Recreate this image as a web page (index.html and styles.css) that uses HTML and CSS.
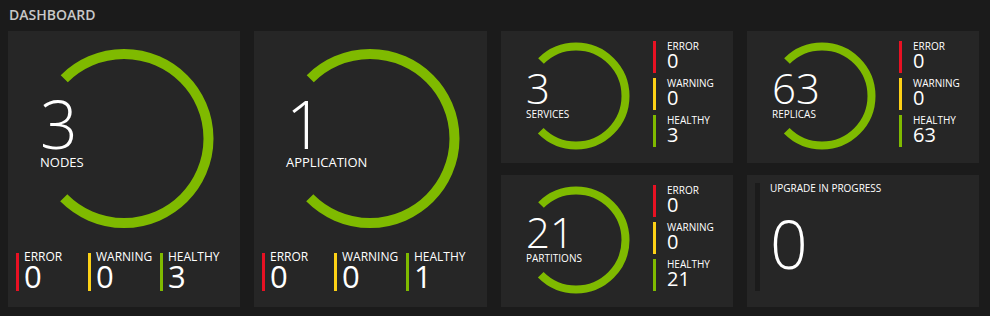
FILE: index.html
```html
<!DOCTYPE html>
<html lang="en">
<head>
  <meta charset="UTF-8">
  <title>Dashboard</title>
  <link rel="stylesheet" href="styles.css">
</head>
<body>

  <h1 class="page-title">DASHBOARD</h1>

  <div class="dashboard">

    <div class="tile tile-big">
      <div class="gauge">
        <svg class="ring" width="232" height="215" viewBox="0 0 232 215">
          <circle cx="116" cy="107.5" r="84.5" fill="none" stroke="#7fba00" stroke-width="10"
            stroke-dasharray="398.2 530.9" transform="rotate(225 116 107.5)"/>
        </svg>
        <div class="gauge-text">
          <div class="gauge-value">3</div>
          <div class="gauge-label">NODES</div>
        </div>
      </div>
      <div class="legend">
        <div class="legend-item error">
          <div class="legend-label">ERROR</div>
          <div class="legend-value">0</div>
        </div>
        <div class="legend-item warning">
          <div class="legend-label">WARNING</div>
          <div class="legend-value">0</div>
        </div>
        <div class="legend-item healthy">
          <div class="legend-label">HEALTHY</div>
          <div class="legend-value">3</div>
        </div>
      </div>
    </div>

    <div class="tile tile-big">
      <div class="gauge">
        <svg class="ring" width="232" height="215" viewBox="0 0 232 215">
          <circle cx="116" cy="107.5" r="84.5" fill="none" stroke="#7fba00" stroke-width="10"
            stroke-dasharray="398.2 530.9" transform="rotate(225 116 107.5)"/>
        </svg>
        <div class="gauge-text">
          <div class="gauge-value">1</div>
          <div class="gauge-label">APPLICATION</div>
        </div>
      </div>
      <div class="legend">
        <div class="legend-item error">
          <div class="legend-label">ERROR</div>
          <div class="legend-value">0</div>
        </div>
        <div class="legend-item warning">
          <div class="legend-label">WARNING</div>
          <div class="legend-value">0</div>
        </div>
        <div class="legend-item healthy">
          <div class="legend-label">HEALTHY</div>
          <div class="legend-value">1</div>
        </div>
      </div>
    </div>

    <div class="tile tile-small">
      <div class="gauge-sm">
        <svg class="ring" width="150" height="132" viewBox="0 0 150 132">
          <circle cx="75" cy="65" r="49.5" fill="none" stroke="#7fba00" stroke-width="8"
            stroke-dasharray="233.3 311" transform="rotate(225 75 65)"/>
        </svg>
        <div class="gauge-text">
          <div class="gauge-value">3</div>
          <div class="gauge-label">SERVICES</div>
        </div>
      </div>
      <div class="legend-sm">
        <div class="legend-item error">
          <div class="legend-label">ERROR</div>
          <div class="legend-value">0</div>
        </div>
        <div class="legend-item warning">
          <div class="legend-label">WARNING</div>
          <div class="legend-value">0</div>
        </div>
        <div class="legend-item healthy">
          <div class="legend-label">HEALTHY</div>
          <div class="legend-value">3</div>
        </div>
      </div>
    </div>

    <div class="tile tile-small">
      <div class="gauge-sm">
        <svg class="ring" width="150" height="132" viewBox="0 0 150 132">
          <circle cx="75" cy="65" r="49.5" fill="none" stroke="#7fba00" stroke-width="8"
            stroke-dasharray="233.3 311" transform="rotate(225 75 65)"/>
        </svg>
        <div class="gauge-text">
          <div class="gauge-value">63</div>
          <div class="gauge-label">REPLICAS</div>
        </div>
      </div>
      <div class="legend-sm">
        <div class="legend-item error">
          <div class="legend-label">ERROR</div>
          <div class="legend-value">0</div>
        </div>
        <div class="legend-item warning">
          <div class="legend-label">WARNING</div>
          <div class="legend-value">0</div>
        </div>
        <div class="legend-item healthy">
          <div class="legend-label">HEALTHY</div>
          <div class="legend-value">63</div>
        </div>
      </div>
    </div>

    <div class="tile tile-small">
      <div class="gauge-sm">
        <svg class="ring" width="150" height="132" viewBox="0 0 150 132">
          <circle cx="75" cy="65" r="49.5" fill="none" stroke="#7fba00" stroke-width="8"
            stroke-dasharray="233.3 311" transform="rotate(225 75 65)"/>
        </svg>
        <div class="gauge-text">
          <div class="gauge-value">21</div>
          <div class="gauge-label">PARTITIONS</div>
        </div>
      </div>
      <div class="legend-sm">
        <div class="legend-item error">
          <div class="legend-label">ERROR</div>
          <div class="legend-value">0</div>
        </div>
        <div class="legend-item warning">
          <div class="legend-label">WARNING</div>
          <div class="legend-value">0</div>
        </div>
        <div class="legend-item healthy">
          <div class="legend-label">HEALTHY</div>
          <div class="legend-value">21</div>
        </div>
      </div>
    </div>

    <div class="tile tile-upgrade">
      <div class="upgrade-bar"></div>
      <div class="upgrade-body">
        <div class="upgrade-label">UPGRADE IN PROGRESS</div>
        <div class="upgrade-value">0</div>
      </div>
    </div>

  </div>

</body>
</html>
```

FILE: styles.css
```css
body {
  margin: 0;
  padding: 0;
  background-color: #1b1b1b;
  font-family: 'Open Sans', 'Noto Sans', sans-serif;
  color: #fff;
}

.page-title {
  margin: 0;
  padding: 8px 9px 0;
  font-size: 14px;
  line-height: 14px;
  font-weight: 600;
  color: #c8c8c8;
}

.dashboard {
  display: grid;
  grid-template-columns: 232px 233px 232px 232px;
  grid-template-rows: 132px 132px;
  gap: 12px 14px;
  margin: 9px 0 0 8px;
}

.tile {
  background-color: #262626;
}

/* big tiles: nodes, applications */
.tile-big {
  grid-row: span 2;
  display: flex;
  flex-direction: column;
}

.gauge {
  display: grid;
  height: 215px;
}

.gauge .ring,
.gauge .gauge-text,
.gauge-sm .ring,
.gauge-sm .gauge-text {
  grid-area: 1 / 1;
}

.gauge .gauge-text {
  padding: 59px 0 0 32px;
}

.gauge .gauge-value {
  font-size: 66px;
  line-height: 66px;
  font-weight: 300;
}

.gauge .gauge-label {
  font-size: 13px;
  line-height: 13px;
}

.legend {
  display: flex;
  padding-left: 8px;
  margin-top: 7px;
}

.legend .legend-item {
  width: 64px;
  height: 38px;
  padding-left: 5px;
}

.legend .legend-label {
  font-size: 12px;
  line-height: 12px;
  margin-top: -2px;
}

.legend .legend-value {
  font-size: 31px;
  line-height: 27px;
}

.legend-item {
  border-left: 3px solid transparent;
}

.legend-item.error {
  border-left-color: #e81123;
}

.legend-item.warning {
  border-left-color: #fcd116;
}

.legend-item.healthy {
  border-left-color: #7fba00;
}

/* small tiles */
.tile-small {
  display: flex;
}

.gauge-sm {
  display: grid;
  width: 150px;
  height: 132px;
}

.gauge-sm .gauge-text {
  padding: 36px 0 0 25px;
}

.gauge-sm .gauge-value {
  font-size: 42px;
  line-height: 42px;
  font-weight: 300;
}

.gauge-sm .gauge-label {
  font-size: 10px;
  line-height: 10px;
}

.legend-sm {
  display: flex;
  flex-direction: column;
  gap: 5px;
  padding-top: 10px;
  margin-left: 2px;
}

.legend-sm .legend-item {
  height: 32px;
  padding-left: 11px;
}

.legend-sm .legend-label {
  font-size: 10px;
  line-height: 10px;
}

.legend-sm .legend-value {
  font-size: 20px;
  line-height: 20px;
}

/* upgrade tile */
.tile-upgrade {
  display: flex;
  padding: 8px;
}

.upgrade-bar {
  width: 5px;
  height: 108px;
  background-color: #1b1b1b;
}

.upgrade-body {
  padding-left: 10px;
}

.upgrade-label {
  font-size: 10px;
  line-height: 10px;
}

.upgrade-value {
  margin-top: 17px;
  font-size: 66px;
  line-height: 66px;
  font-weight: 300;
}
```
